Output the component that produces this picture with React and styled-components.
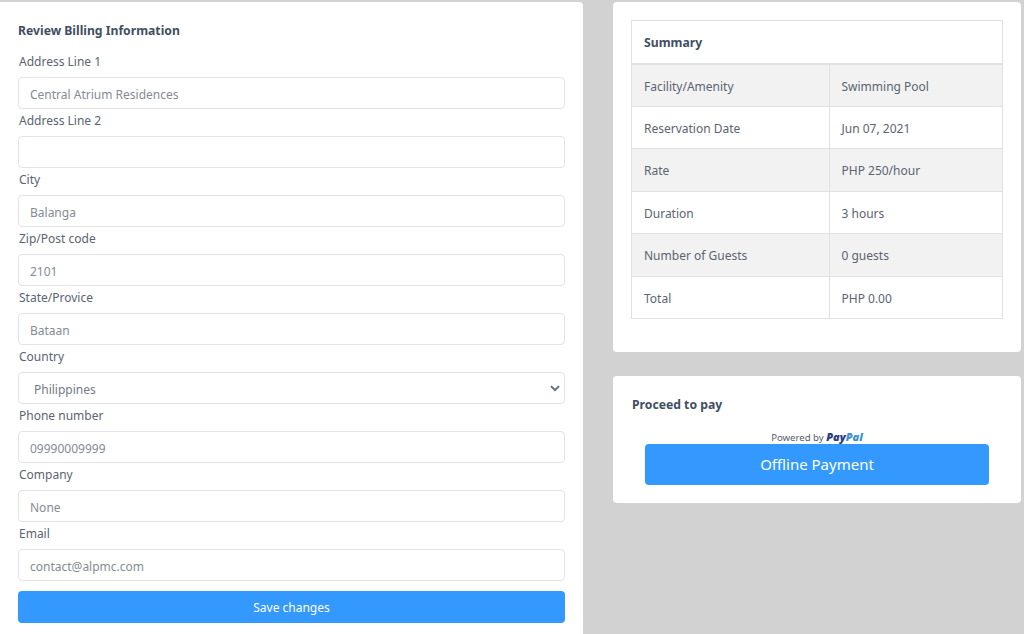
import React from "react";
import styled, { createGlobalStyle } from "styled-components";

const FONT = `"Noto Sans", "Open Sans", "Liberation Sans", sans-serif`;

const billingFields = [
  { label: "Address Line 1", value: "Central Atrium Residences" },
  { label: "Address Line 2", value: "" },
  { label: "City", value: "Balanga" },
  { label: "Zip/Post code", value: "2101" },
  { label: "State/Provice", value: "Bataan" },
  { label: "Country", value: "Philippines", select: true },
  { label: "Phone number", value: "09990009999" },
  { label: "Company", value: "None" },
  { label: "Email", value: "contact@alpmc.com" },
];

const summaryRows = [
  ["Facility/Amenity", "Swimming Pool"],
  ["Reservation Date", "Jun 07, 2021"],
  ["Rate", "PHP 250/hour"],
  ["Duration", "3 hours"],
  ["Number of Guests", "0 guests"],
  ["Total", "PHP 0.00"],
];

export default function App() {
  return (
    <>
      <GlobalStyle />
      <Page>
        <BillingCard>
          <CardTitle>Review Billing Information</CardTitle>
          {billingFields.map(field => (
            <Field key={field.label}>
              <FieldLabel>{field.label}</FieldLabel>
              {field.select ? (
                <SelectBox>
                  <SelectValue>{field.value}</SelectValue>
                  <svg width="10" height="7" viewBox="0 0 10 7" fill="none">
                    <path d="M1 1.2l4 4 4-4" stroke="#5f6b7d" strokeWidth="1.9" />
                  </svg>
                </SelectBox>
              ) : (
                <TextInput readOnly placeholder={field.value} />
              )}
            </Field>
          ))}
          <SaveButton>Save changes</SaveButton>
        </BillingCard>
        <SideColumn>
          <SummaryCard>
            <SummaryTable>
              <colgroup>
                <NameCol />
                <col />
              </colgroup>
              <thead>
                <tr>
                  <SummaryHead colSpan={2}>Summary</SummaryHead>
                </tr>
              </thead>
              <tbody>
                {summaryRows.map(([name, value]) => (
                  <SummaryRow key={name}>
                    <SummaryCell>{name}</SummaryCell>
                    <SummaryCell>{value}</SummaryCell>
                  </SummaryRow>
                ))}
              </tbody>
            </SummaryTable>
          </SummaryCard>
          <PayCard>
            <PayTitle>Proceed to pay</PayTitle>
            <PoweredBy>
              Powered by <PayWord>Pay</PayWord><PalWord>Pal</PalWord>
            </PoweredBy>
            <OfflineButton>Offline Payment</OfflineButton>
          </PayCard>
        </SideColumn>
      </Page>
    </>
  );
}

const GlobalStyle = createGlobalStyle`
  html, body {
    margin: 0;
    height: 100%;
    overflow: hidden;
    background: #d2d2d2;
  }
  * { box-sizing: border-box; }
  body {
    font-family: ${FONT};
    color: #495057;
  }
`;

const Page = styled.div`
  display: flex;
  align-items: flex-start;
  gap: 30px;
  height: 634px;
  padding: 2px 3px 0 0;
  overflow: hidden;
`;

const BillingCard = styled.div`
  width: 583px;
  height: 640px;
  flex: none;
  padding: 19px 18px 0 18px;
  background: #fff;
  border-radius: 0 4px 4px 0;
`;

const CardTitle = styled.div`
  font-size: 12.2px;
  font-weight: 700;
  line-height: 20px;
  color: #414e62;
  margin-bottom: 9px;
`;

const Field = styled.div`
  display: flex;
  flex-direction: column;
`;

const FieldLabel = styled.div`
  height: 27px;
  padding: 3px 0 0 1px;
  font-size: 12px;
  line-height: 18px;
  color: #5a6472;
`;

const TextInput = styled.input`
  display: block;
  width: 100%;
  height: 32px;
  padding: 3px 11px 0;
  border: 1px solid #e3e4ea;
  border-radius: 4px;
  background: #fff;
  font-family: ${FONT};
  font-size: 12px;
  outline: none;
  &::placeholder {
    color: #848b96;
    opacity: 1;
  }
`;

const SelectBox = styled.div`
  display: flex;
  align-items: center;
  justify-content: space-between;
  height: 32px;
  padding: 1px 4px 0 15px;
  border: 1px solid #e3e4ea;
  border-radius: 4px;
  font-size: 12px;
  color: #737b86;
`;

const SelectValue = styled.span`
  padding-top: 2px;
`;

const SaveButton = styled.button`
  display: block;
  width: 100%;
  height: 32px;
  margin-top: 10px;
  border: 0;
  border-radius: 4px;
  background: #3399ff;
  color: #fff;
  font-family: ${FONT};
  font-size: 12px;
`;

const SideColumn = styled.div`
  flex: 1;
  min-width: 0;
  display: flex;
  flex-direction: column;
  gap: 24px;
`;

const SummaryCard = styled.div`
  height: 350px;
  padding: 18px 18px 0;
  background: #fff;
  border-radius: 4px;
`;

const SummaryTable = styled.table`
  width: 372px;
  table-layout: fixed;
  border-collapse: collapse;
  font-size: 12px;
  color: #5a6472;
`;

const NameCol = styled.col`
  width: 197.5px;
`;

const SummaryHead = styled.th`
  height: 43px;
  padding: 2px 12px 0;
  text-align: left;
  font-size: 12.2px;
  font-weight: 700;
  color: #414e62;
  border: 1px solid #dee2e6;
  border-bottom-width: 2px;
`;

const SummaryRow = styled.tr`
  height: 42.5px;
  &:nth-child(odd) {
    background: #f2f2f2;
  }
`;

const SummaryCell = styled.td`
  padding: 2px 12px 0;
  border: 1px solid #dee2e6;
`;

const PayCard = styled.div`
  height: 127px;
  padding: 19px 32px 0 19px;
  background: #fff;
  border-radius: 4px;
`;

const PayTitle = styled.div`
  font-size: 12.2px;
  font-weight: 700;
  line-height: 20px;
  color: #414e62;
`;

const PoweredBy = styled.div`
  margin-top: 15px;
  padding-left: 13px;
  height: 14px;
  text-align: center;
  font-size: 9.6px;
  line-height: 14px;
  color: #555d6b;
`;

const PayWord = styled.span`
  font-family: "Open Sans", sans-serif;
  font-size: 11px;
  font-weight: 800;
  font-style: italic;
  color: #253b80;
`;

const PalWord = styled(PayWord)`
  color: #3b8fd6;
`;

const OfflineButton = styled.button`
  display: block;
  width: 344px;
  height: 41px;
  margin-left: 13px;
  padding: 0 0 2px;
  border: 0;
  border-radius: 4px;
  background: #3399ff;
  color: #fff;
  font-family: ${FONT};
  font-size: 15px;
`;
